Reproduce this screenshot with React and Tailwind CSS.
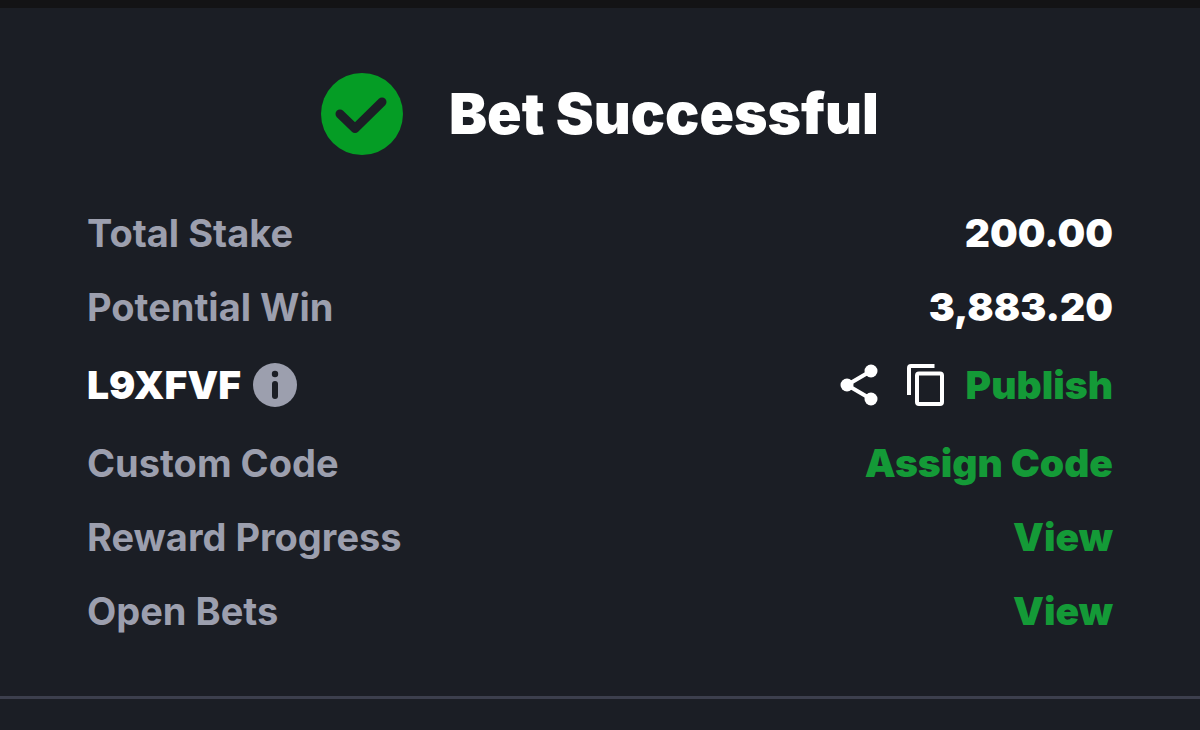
import React from 'react';

const rows = [
  { label: 'Total Stake', value: '200.00' },
  { label: 'Potential Win', value: '3,883.20' },
];

const actions = [
  { label: 'Custom Code', action: 'Assign Code' },
  { label: 'Reward Progress', action: 'View' },
  { label: 'Open Bets', action: 'View' },
];

function CheckBadge() {
  return (
    <svg viewBox="0 0 82 82" className="size-[82px] shrink-0" aria-hidden="true">
      <circle cx="41" cy="41" r="41" fill="#059d25" />
      <path d="M19 41L34 55.500L61 29" fill="none" stroke="#1b1e25" strokeWidth="9" strokeLinecap="round" strokeLinejoin="round" />
    </svg>
  );
}

function InfoIcon() {
  return (
    <svg viewBox="0 0 44 44" className="size-11" aria-hidden="true">
      <circle cx="22" cy="22" r="22" fill="#9c9fae" />
      <circle cx="22" cy="11" r="3.200" fill="#1b1e25" />
      <path d="M22 21v12" fill="none" stroke="#1b1e25" strokeWidth="6" strokeLinecap="round" />
    </svg>
  );
}

function ShareIcon() {
  return (
    <svg viewBox="0 0 38 42" className="h-[42px] w-[38px]" aria-hidden="true">
      <path d="M31 7L7 21l24 14" fill="none" stroke="#fff" strokeWidth="4" />
      <circle cx="31" cy="7" r="6.500" fill="#fff" />
      <circle cx="7" cy="21" r="6.500" fill="#fff" />
      <circle cx="31" cy="35" r="6.500" fill="#fff" />
    </svg>
  );
}

function CopyIcon() {
  return (
    <svg viewBox="0 0 38 44" className="h-11 w-[38px]" aria-hidden="true">
      <path d="M3 32V5a2 2 0 0 1 2-2h23.500" fill="none" stroke="#fff" strokeWidth="4" />
      <rect x="11" y="10.500" width="25" height="30.500" rx="2" fill="none" stroke="#fff" strokeWidth="4" />
    </svg>
  );
}

export default function App() {
  return (
    <main className="min-h-screen border-t-8 border-[#131315] bg-[#1b1e25] font-['Inter',sans-serif] text-[39px] leading-[46px] text-white">
      <section className="border-b-3 border-[#3c3f4d] px-[87px] pt-[65px] pb-[62px]">
        <header className="flex items-center justify-center gap-[46px]">
          <CheckBadge />
          <h1 className="text-[57px] leading-[68px] font-black">Bet Successful</h1>
        </header>

        <div className="mt-[55px] flex flex-col gap-7">
          {rows.map((row) => (
            <div key={row.label} className="flex items-center justify-between">
              <span className="text-[38px] font-bold text-[#9c9fae]">{row.label}</span>
              <span className="font-black">{row.value}</span>
            </div>
          ))}

          <div className="flex h-[54px] items-center justify-between">
            <div className="flex items-center gap-3">
              <span className="font-black">L9XFVF</span>
              <button type="button" aria-label="Booking code info"><InfoIcon /></button>
            </div>
            <div className="flex items-center">
              <button type="button" aria-label="Share" className="mr-7"><ShareIcon /></button>
              <button type="button" aria-label="Copy code" className="mr-[22px]"><CopyIcon /></button>
              <button type="button" className="font-black text-[#149a37]">Publish</button>
            </div>
          </div>

          {actions.map((row) => (
            <div key={row.label} className="flex items-center justify-between">
              <span className="text-[38px] font-bold text-[#9c9fae]">{row.label}</span>
              <button type="button" className="font-black text-[#149a37]">{row.action}</button>
            </div>
          ))}
        </div>
      </section>
    </main>
  );
}
